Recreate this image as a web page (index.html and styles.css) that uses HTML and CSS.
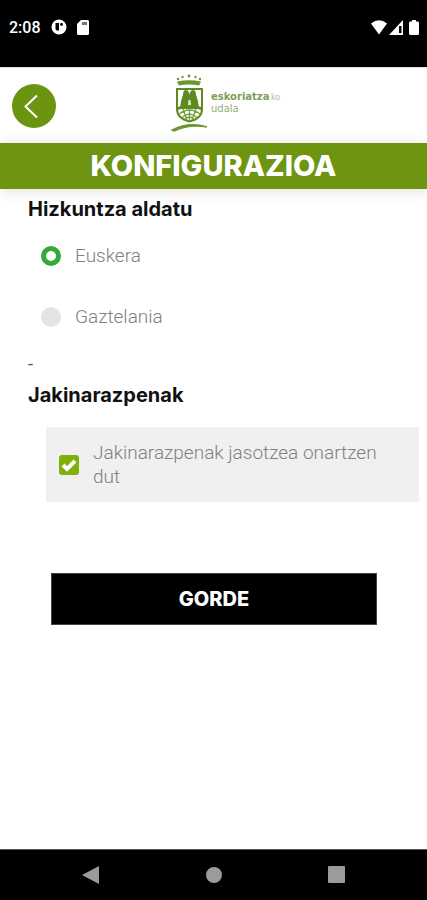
FILE: index.html
```html
<!DOCTYPE HTML>
<html lang="eu">
<head>
<meta charset="UTF-8">
<meta name="viewport" content="width=device-width, initial-scale=1">
<title>Konfigurazioa</title>
<link rel="stylesheet" href="styles.css">
</head>

<body>
<div class="statusbar">
	<span class="clock">2:08</span>
	<svg class="app-icon" width="16" height="16" viewBox="0 0 16 16">
		<circle cx="8" cy="8" r="7.500" fill="#fff"/>
		<path d="M4.500 4H8v7.500H5.500L4.500 10z" fill="#000"/>
		<circle cx="10.500" cy="5.500" r="1.400" fill="#000"/>
	</svg>
	<svg class="sd-icon" width="12" height="15" viewBox="0 0 12 15">
		<path d="M4 0h7l1 1v13l-1 1H1l-1-1V4z" fill="#fff"/>
		<path d="M5 2h5v3H5z" fill="#777"/>
	</svg>
	<div class="signals">
		<svg width="16" height="15" viewBox="0 0 16 15">
			<path d="M0 3.500Q8-2.800 16 3.500L8 14.500z" fill="#fff"/>
		</svg>
		<svg width="14" height="15" viewBox="0 0 14 15">
			<path d="M14 0v15H0z" fill="#fff"/>
			<path d="M10 6h2.500v7H10z" fill="#000"/>
		</svg>
		<svg class="battery" width="10" height="15" viewBox="0 0 10 15">
			<path d="M3 0h4v1.500h2l1 1V14l-1 1H1l-1-1V2.500l1-1h2z" fill="#fff"/>
		</svg>
	</div>
</div>

<header class="topbar">
	<a class="back" href="#" aria-label="Atzera">
		<svg width="44" height="44" viewBox="0 0 44 44">
			<path d="M25 11.500L13.500 22.500L25 33.500" fill="none" stroke="#fff" stroke-width="2"/>
		</svg>
	</a>
	<svg class="logo" width="112" height="58" viewBox="0 0 112 58">
		<!-- crown -->
		<g fill="#6c9730">
			<circle cx="8" cy="5" r="1.200"/>
			<circle cx="12.500" cy="3" r="1.200"/>
			<circle cx="19" cy="2" r="1.400"/>
			<circle cx="25.500" cy="3" r="1.200"/>
			<circle cx="30" cy="5" r="1.200"/>
			<path d="M7 7.500q12-2.500 24 0l-2 4q-10-2-20 0z"/>
		</g>
		<!-- shield -->
		<path d="M7 15h25v20q0 9.500-12.500 12.500-12.500-3-12.500-12.500z" fill="#fff" stroke="#5d8b1f" stroke-width="2"/>
		<path d="M10 35q1-10 3-14 0-5 3-5 3 0 3.500 5 .5-5 3.500-5t3 5q2 4 3 14z" fill="#5d8b1f"/>
		<path d="M18.500 26h2l1 8h-4z" fill="#dfe9cf"/>
		<path d="M7.500 33q12-4 24 0v3q-12-4-24 0z" fill="#5d8b1f"/>
		<path d="M9 40q10.500-8 21 0M12 43.500q7.500-7 15 0M15 45q4.500-4 9 0M19.500 34v13M13 35l4 11M26 35l-4 11" fill="none" stroke="#79a143" stroke-width="1.300"/>
		<!-- ground line -->
		<path d="M2 56q17-9 35-3-18-3-33 4z" fill="#6c9730" stroke="#6c9730" stroke-width="1.400"/>
		<text class="logo-name" x="41" y="26">eskoriatza</text>
		<text class="logo-ko" x="101" y="26">ko</text>
		<text class="logo-udala" x="41" y="38">udala</text>
	</svg>
</header>
<h1 class="title">KONFIGURAZIOA</h1>

<form class="settings">
	<fieldset class="languages">
		<legend>Hizkuntza aldatu</legend>
		<div class="option">
			<input type="radio" name="lang" id="euskera" checked>
			<label for="euskera">Euskera</label>
		</div>
		<div class="option">
			<input type="radio" name="lang" id="gaztelania">
			<label for="gaztelania">Gaztelania</label>
		</div>
	</fieldset>
	<div class="dash">-</div>
	<h2>Jakinarazpenak</h2>
	<div class="notify">
		<span class="tick">
			<input type="checkbox" id="notify" checked>
			<svg width="20" height="20" viewBox="0 0 20 20">
				<path d="M4 10l4 4L16 6" fill="none" stroke="#fff" stroke-width="4"/>
			</svg>
		</span>
		<label for="notify">Jakinarazpenak jasotzea onartzen dut</label>
	</div>
	<button type="button" class="save">GORDE</button>
</form>

<nav class="navbar">
	<svg width="18" height="20" viewBox="0 0 18 20"><path d="M0 10L17 1v18z"/></svg>
	<svg width="18" height="18" viewBox="0 0 18 18"><circle cx="9" cy="9" r="8"/></svg>
	<svg width="18" height="18" viewBox="0 0 18 18"><rect x="0" y="0" width="17" height="17" rx="1"/></svg>
</nav>
</body>
</html>
```

FILE: styles.css
```css
* {box-sizing:border-box;}
body {margin:0; min-height:100vh; display:flex; flex-direction:column; background:#fff; font-family:Roboto, sans-serif;}
svg {display:block;}

.statusbar {display:flex; align-items:center; height:67px; padding:0 8px 13px 9px; background:#000; color:#fff;}
.clock {font-size:16px; font-weight:500;}
.app-icon {margin-left:10px;}
.sd-icon {margin-left:10px;}
.signals {display:flex; gap:2px; margin-left:auto;}
.battery {margin-left:4px;}

.topbar {display:grid; grid-template-columns:1fr auto 1fr; align-items:center; height:76px; padding:0 12px; border-top:1px solid #ddd;}
.back {width:44px; height:44px; border-radius:50%; background:#6b9510;}
.logo {margin-left:24px; margin-bottom:6px;}
.logo text {font-family:"DejaVu Sans", sans-serif; fill:#7d9f55;}
.logo .logo-name {font-size:10px; font-weight:700;}
.logo .logo-ko {font-size:8px; fill:#aac08f;}
.logo .logo-udala {font-size:10px; fill:#93ad75;}

.title {margin:0; background:#6d9511; color:#fff; font-family:Inter, sans-serif; font-size:29px; line-height:46px; font-weight:800; text-align:center; box-shadow:0 2px 14px rgba(0,0,0,.12);}

.settings {flex:1; padding:8px 8px 0 28px;}
.languages {margin:0; padding:0; border:0;}
legend, h2 {margin:0; padding:0; font-family:Inter, sans-serif; font-size:20px; line-height:24px; font-weight:700; color:#111;}
label {font-size:19px; line-height:24px; font-weight:300; color:#808080;}
.option {display:flex; align-items:center; gap:14px; height:61px; padding-left:13px;}
.option:first-of-type {margin-top:4px;}
input {appearance:none; flex:none; width:20px; height:20px; margin:0;}
input[type=radio] {border-radius:50%; background:#e4e4e4;}
input[type=radio]:checked {background:#fff; border:5px solid #35a83a;}
.dash {height:36px; font-size:18px; line-height:34px; color:#555;}
h2 {margin-bottom:20px;}

.notify {display:flex; align-items:center; gap:14px; margin-left:18px; padding:14px 40px 13px 13px; background:#f0f0f0;}
.tick {display:grid; flex:none;}
.tick input, .tick svg {grid-area:1/1;}
.tick svg {pointer-events:none;}
input[type=checkbox] {border-radius:3px; background:#ccc;}
input[type=checkbox]:checked {background:#80b00c;}

.save {display:block; width:calc(100% - 65px); height:52px; margin:71px 0 0 23px; padding:0; border:1px solid #444; background:#000; color:#fff; font-family:Inter, sans-serif; font-size:20px; font-weight:800;}

.navbar {display:grid; grid-template-columns:repeat(3, 1fr); place-items:center; height:51px; padding:0 29px; border-top:1px solid #555; background:#000; fill:#9b9b9b;}
```
